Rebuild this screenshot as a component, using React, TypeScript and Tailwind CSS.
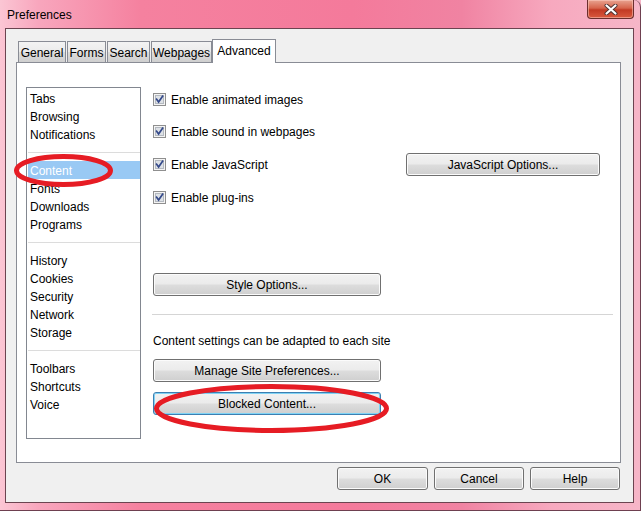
import React from "react";

const font = "font-['Liberation_Sans',Arial,sans-serif]";

function Btn({
  label,
  w,
  h = 23,
  focused = false,
}: {
  label: string;
  w: number;
  h?: number;
  focused?: boolean;
}) {
  return (
    <div
      className={
        "flex items-center justify-center rounded-[3px] border pt-px text-[12px] text-black bg-[linear-gradient(to_bottom,#f2f2f2_0%,#ebebeb_48%,#dddddd_52%,#cfcfcf_100%)] " +
        (focused
          ? "border-[#3c7fb1] shadow-[inset_0_0_0_1px_#7fd3f5]"
          : "border-[#707070] shadow-[inset_0_0_0_1px_#fbfbfb]")
      }
      style={{ width: w, height: h }}
    >
      {label}
    </div>
  );
}

function Check() {
  return (
    <svg width="13" height="13" viewBox="0 0 13 13" className="shrink-0">
      <rect x="0.5" y="0.5" width="12" height="12" fill="#f4f4f4" stroke="#8f8f8f" />
      <rect x="2.5" y="2.5" width="8" height="8" fill="#dde1e6" stroke="#b4b9c0" />
      <path d="M3.6 6.2 L5.6 9 L9.6 3.2" stroke="#34498a" strokeWidth="1.7" fill="none" strokeLinecap="square" />
    </svg>
  );
}

function CheckRow({ label, h = 18 }: { label: string; h?: number }) {
  return (
    <div className="flex items-center" style={{ height: h }}>
      <Check />
      <span className="ml-[5px] pt-px text-[12px] text-black">{label}</span>
    </div>
  );
}

type Item = { t: string; sel?: boolean } | "sep";

const items: Item[] = [
  { t: "Tabs" },
  { t: "Browsing" },
  { t: "Notifications" },
  "sep",
  { t: "Content", sel: true },
  { t: "Fonts" },
  { t: "Downloads" },
  { t: "Programs" },
  "sep",
  { t: "History" },
  { t: "Cookies" },
  { t: "Security" },
  { t: "Network" },
  { t: "Storage" },
  "sep",
  { t: "Toolbars" },
  { t: "Shortcuts" },
  { t: "Voice" },
];

const tabs = [
  { t: "General", w: 48, ml: 2 },
  { t: "Forms", w: 39, ml: 1 },
  { t: "Search", w: 43, ml: 1 },
  { t: "Webpages", w: 61, ml: 1 },
];

export default function App() {
  return (
    <div
      className={
        font +
        " relative w-[641px] h-[511px] overflow-hidden bg-[linear-gradient(to_right,#fbc6d4_0%,#f8a6bd_6%,#f5819f_22%,#f47a9b_55%,#f083a2_72%,#f7a9bf_86%,#f6b6c8_100%)]"
      }
    >
      <div className="pointer-events-none absolute inset-0 rounded-tr-[7px] border-b border-r border-[#6e4050]" />
      {/* title bar */}
      <div className="flex h-[28px]">
        <div className="pl-[7px] pt-[6px] text-[12px] text-black">Preferences</div>
        <div className="ml-auto mr-[7px] flex h-[19px] w-[47px] items-center justify-center rounded-b-[4px] border border-t-0 border-[#6a2e2e] bg-[linear-gradient(to_bottom,#e8a391_0%,#d6644c_45%,#c23a24_55%,#d9593e_100%)] shadow-[inset_0_0_0_1px_rgba(255,210,200,0.5)]">
          <svg width="14" height="11" viewBox="0 0 14 11">
            <path d="M2.5 1.5 L11.5 9.5 M11.5 1.5 L2.5 9.5" stroke="#4a3030" strokeWidth="4" strokeLinecap="round" />
            <path d="M2.5 1.5 L11.5 9.5 M11.5 1.5 L2.5 9.5" stroke="#ffffff" strokeWidth="2.2" strokeLinecap="round" />
          </svg>
        </div>
      </div>

      {/* client */}
      <div className="ml-[5px] flex h-[475px] w-[629px] flex-col border border-[#6b4450] bg-[#f0f0f0] pl-[10px] pr-[12px] pt-[10px]">
        {/* tabs */}
        <div className="flex h-[23px] items-end">
          {tabs.map((tb) => (
            <div
              key={tb.t}
              className="flex h-[21px] items-center justify-center border border-b-0 border-[#898c95] bg-[linear-gradient(to_bottom,#f3f3f3_0%,#ebebeb_50%,#dddddd_50%,#cfcfcf_100%)] pt-px text-[12px] text-black"
              style={{ width: tb.w, marginLeft: tb.ml }}
            >
              {tb.t}
            </div>
          ))}
          <div className="relative z-10 mb-[-1px] flex h-[24px] w-[64px] items-center justify-center border border-b-0 border-[#898c95] bg-white pb-[1px] text-[12px] text-black">
            Advanced
          </div>
        </div>

        {/* panel */}
        <div className="flex h-[401px] w-[605px] border border-[#898c95] bg-white">
          {/* list box */}
          <div className="ml-[9px] mt-[24px] h-[352px] w-[115px] border border-[#828790] bg-white pl-px pt-px">
            {items.map((it, i) =>
              it === "sep" ? (
                <div key={i} className="flex h-[18px] items-center">
                  <div className="h-px w-full bg-[#dcdcdc]" />
                </div>
              ) : (
                <div
                  key={i}
                  className={
                    "flex h-[18px] items-center pl-[2px] pt-px text-[12px] " +
                    (it.sel ? "bg-[#99c9f4] text-white" : "text-black")
                  }
                >
                  {it.t}
                </div>
              )
            )}
          </div>

          {/* right column */}
          <div className="ml-[12px] flex w-[460px] flex-col">
            <div className="mt-[27px]">
              <CheckRow label="Enable animated images" />
            </div>
            <div className="mt-[14px]">
              <CheckRow label="Enable sound in webpages" />
            </div>
            <div className="mt-[13px] flex h-[22px] items-center">
              <Check />
              <span className="ml-[5px] pt-px text-[12px] text-black">Enable JavaScript</span>
              <div className="ml-auto mr-[13px]">
                <Btn label="JavaScript Options..." w={194} h={23} />
              </div>
            </div>
            <div className="mt-[13px]">
              <CheckRow label="Enable plug-ins" />
            </div>
            <div className="mt-[67px]">
              <Btn label="Style Options..." w={228} h={23} />
            </div>
            <div className="-ml-px mt-[18px] h-px w-[461px] bg-[#d5d5d5]" />
            <div className="mt-[17px] flex h-[16px] items-center pt-px text-[12px] text-black">
              Content settings can be adapted to each site
            </div>
            <div className="mt-[11px]">
              <Btn label="Manage Site Preferences..." w={228} h={23} />
            </div>
            <div className="mt-[10px]">
              <Btn label="Blocked Content..." w={228} h={23} focused />
            </div>
          </div>
        </div>

        {/* bottom buttons */}
        <div className="mt-[4px] flex justify-end gap-[6px] pr-[1px]">
          <Btn label="OK" w={91} h={23} />
          <Btn label="Cancel" w={90} h={23} />
          <Btn label="Help" w={90} h={23} />
        </div>
      </div>

      {/* annotation ellipses */}
      <svg className="pointer-events-none absolute left-0 top-0" width="641" height="511">
        <ellipse cx="63.5" cy="170.5" rx="47" ry="14" fill="none" stroke="#e61c24" strokeWidth="5" />
        <ellipse cx="271.5" cy="408.5" rx="115" ry="22" fill="none" stroke="#e61c24" strokeWidth="5" />
      </svg>
    </div>
  );
}
